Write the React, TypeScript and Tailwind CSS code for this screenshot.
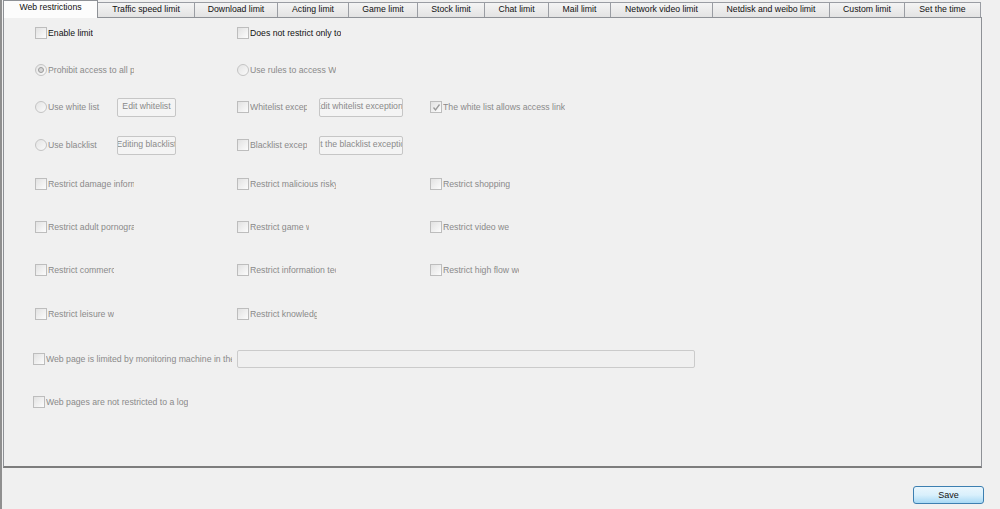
import React from 'react'

const tabs = [
  { label: 'Web restrictions', w: 95 },
  { label: 'Traffic speed limit', w: 97 },
  { label: 'Download limit', w: 83 },
  { label: 'Acting limit', w: 71 },
  { label: 'Game limit', w: 69 },
  { label: 'Stock limit', w: 67 },
  { label: 'Chat limit', w: 64 },
  { label: 'Mail limit', w: 62 },
  { label: 'Network video limit', w: 102 },
  { label: 'Netdisk and weibo limit', w: 117 },
  { label: 'Custom limit', w: 75 },
  { label: 'Set the time', w: 76 },
]

function Box({ checked = false }: { checked?: boolean }) {
  return (
    <span className="w-[12px] h-[12px] shrink-0 border border-[#bdbdbd] bg-linear-to-br from-[#e2e2e2] to-[#fcfcfc] flex items-center justify-center">
      {checked && (
        <svg width="9" height="9" viewBox="0 0 9 9">
          <path d="M1.5 4.5 L3.5 7 L7.5 1.5" fill="none" stroke="#9a9a9a" strokeWidth="1.3" />
        </svg>
      )}
    </span>
  )
}

function Radio({ checked = false }: { checked?: boolean }) {
  return (
    <span className="w-[12px] h-[12px] shrink-0 rounded-full border border-[#c4c4c4] bg-linear-to-br from-[#e4e4e4] to-[#fafafa] flex items-center justify-center">
      {checked && <span className="w-[6px] h-[6px] rounded-full border border-[#9a9a9a] bg-[#d6d6d6]"></span>}
    </span>
  )
}

function Item({
  label,
  w,
  radio = false,
  checked = false,
  dim = true,
}: {
  label: string
  w?: number
  radio?: boolean
  checked?: boolean
  dim?: boolean
}) {
  return (
    <div className="flex items-center gap-px">
      {radio ? <Radio checked={checked} /> : <Box checked={checked} />}
      <span
        className={`whitespace-nowrap overflow-hidden leading-[12px] ${dim ? 'text-[#8a8a8a]' : 'text-[#111]'}`}
        style={w ? { width: w } : undefined}
      >
        {label}
      </span>
    </div>
  )
}

function Btn({ label, w }: { label: string; w: number }) {
  return (
    <div
      className="h-[19px] border border-[#c6c6c6] rounded-[2px] bg-[#f4f4f4] text-[#8a8a8a] flex items-center justify-center overflow-hidden whitespace-nowrap shrink-0"
      style={{ width: w }}
    >
      {label}
    </div>
  )
}

export default function App() {
  return (
    <div
      className="w-[1000px] h-[509px] bg-[#f0f0f0] border-l-2 border-[#8f8f8f] text-[8.7px] overflow-hidden"
      style={{ fontFamily: '"Liberation Sans", Arial, sans-serif' }}
    >
      <div className="pl-px">
        {/* tab strip */}
        <div className="flex items-end h-[17px] relative z-10">
          {tabs.map((t, i) =>
            i === 0 ? (
              <div
                key={t.label}
                className="h-[18px] -mb-px bg-[#fcfcfc] border border-b-0 border-[#8e9196] flex items-center justify-center pb-[3px] text-[#111] whitespace-nowrap"
                style={{ width: t.w }}
              >
                {t.label}
              </div>
            ) : (
              <div
                key={t.label}
                className="h-[15px] bg-linear-to-b from-[#f4f4f4] to-[#e3e3e3] border border-l-0 border-b-0 border-[#9a9da3] flex items-center justify-center text-[#111] whitespace-nowrap"
                style={{ width: t.w }}
              >
                {t.label}
              </div>
            )
          )}
        </div>

        {/* panel */}
        <div className="w-[979px] h-[451px] border border-[#8e9196] border-b-2 border-b-[#7d7d7d] bg-[#f0f0f0] pl-[31px]">
          <div className="flex items-center h-[20px] mt-[5px]">
            <div className="w-[202px]">
              <Item label="Enable limit" dim={false} />
            </div>
            <Item label="Does not restrict only to" dim={false} />
          </div>

          <div className="flex items-center h-[20px] mt-[17px]">
            <div className="w-[202px]">
              <Item label="Prohibit access to all pages" radio checked w={86} />
            </div>
            <Item label="Use rules to access Web" radio w={86} />
          </div>

          <div className="flex items-center h-[20px] mt-[17px]">
            <div className="w-[202px] flex items-center">
              <Item label="Use white list" radio w={69} />
              <Btn label="Edit whitelist" w={59} />
            </div>
            <div className="w-[193px] flex items-center">
              <Item label="Whitelist exceptions" w={57} />
              <div className="ml-[12px]">
                <Btn label="Edit whitelist exceptions" w={84} />
              </div>
            </div>
            <Item label="The white list allows access link" checked />
          </div>

          <div className="flex items-center h-[20px] mt-[18px]">
            <div className="w-[202px] flex items-center">
              <Item label="Use blacklist" radio w={69} />
              <Btn label="Editing blacklist" w={59} />
            </div>
            <div className="w-[193px] flex items-center">
              <Item label="Blacklist exceptions" w={57} />
              <div className="ml-[12px]">
                <Btn label="Edit the blacklist exceptions" w={84} />
              </div>
            </div>
          </div>

          <div className="flex items-center h-[20px] mt-[19px]">
            <div className="w-[202px]">
              <Item label="Restrict damage information" w={86} />
            </div>
            <div className="w-[193px]">
              <Item label="Restrict malicious risky" w={86} />
            </div>
            <Item label="Restrict shopping web" w={67} />
          </div>

          <div className="flex items-center h-[20px] mt-[23px]">
            <div className="w-[202px]">
              <Item label="Restrict adult pornography" w={86} />
            </div>
            <div className="w-[193px]">
              <Item label="Restrict game web" w={59} />
            </div>
            <Item label="Restrict video web" w={66} />
          </div>

          <div className="flex items-center h-[20px] mt-[23px]">
            <div className="w-[202px]">
              <Item label="Restrict commercial" w={66} />
            </div>
            <div className="w-[193px]">
              <Item label="Restrict information technology" w={86} />
            </div>
            <Item label="Restrict high flow web" w={76} />
          </div>

          <div className="flex items-center h-[20px] mt-[24px]">
            <div className="w-[202px]">
              <Item label="Restrict leisure web" w={66} />
            </div>
            <Item label="Restrict knowledge" w={67} />
          </div>

          <div className="flex items-center h-[20px] mt-[25px] -ml-[2px]">
            <Item label="Web page is limited by monitoring machine in the" w={186} />
            <div className="ml-[5px] w-[458px] h-[18px] border border-[#cbcbcb] rounded-[2px] bg-[#f0f0f0]"></div>
          </div>

          <div className="flex items-center h-[20px] mt-[23px] -ml-[2px]">
            <Item label="Web pages are not restricted to a log" />
          </div>
        </div>

        {/* footer */}
        <div className="flex justify-end pr-[16px] pt-[18px]">
          <button className="w-[71px] h-[18px] rounded-[3px] border border-[#3c7fb1] bg-linear-to-b from-[#eaf6fd] via-[#d9f0fc] to-[#a7d9f5] text-[#111] text-[9px] leading-none">
            Save
          </button>
        </div>
      </div>
    </div>
  )
}
